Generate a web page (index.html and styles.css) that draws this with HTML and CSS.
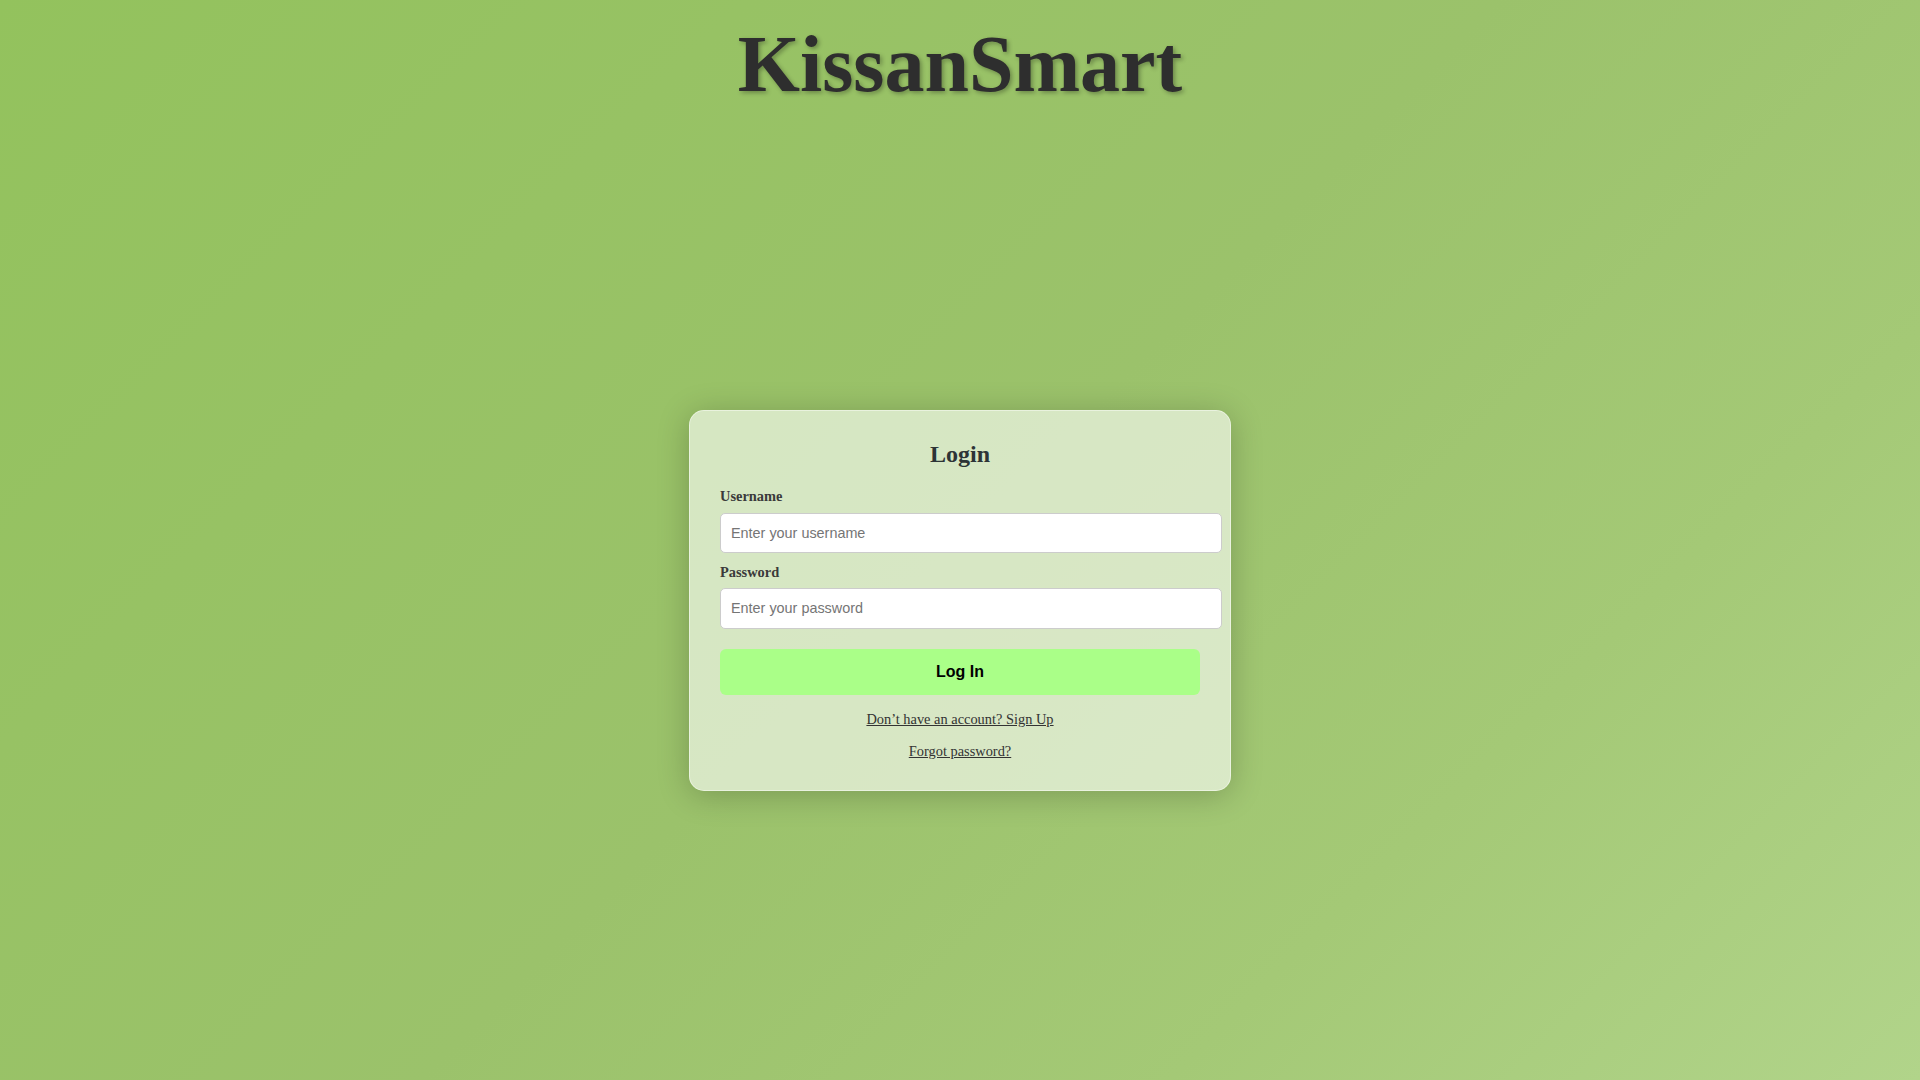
FILE: index.html
```html
<!DOCTYPE html>
<html lang="en">
<head>
<meta charset="utf-8">
<title>KissanSmart - Login</title>
<link rel="stylesheet" href="styles.css">
</head>
<body>
<header class="site-header">
  <h1 class="brand">KissanSmart</h1>
</header>
<main class="page-main">
  <div class="login-card">
    <h2 class="login-title">Login</h2>
    <form class="login-form" onsubmit="return false;">
      <label class="field-label" for="username">Username</label>
      <input class="field-input" id="username" type="text" placeholder="Enter your username">
      <label class="field-label" for="password">Password</label>
      <input class="field-input" id="password" type="password" placeholder="Enter your password">
      <button class="login-button" type="submit">Log In</button>
    </form>
    <div class="link-row"><a class="card-link" href="#">Don’t have an account? Sign Up</a></div>
    <div class="link-row"><a class="card-link" href="#">Forgot password?</a></div>
  </div>
</main>
</body>
</html>
```
FILE: styles.css
```css
html, body {
  margin: 0;
  padding: 0;
  height: 100%;
}
body {
  font-family: "Liberation Serif", "Times New Roman", serif;
  background: linear-gradient(135deg, #93c25d 0%, #9bc26b 50%, #a4c976 75%, #b1d48a 100%);
  display: flex;
  flex-direction: column;
  min-height: 100vh;
  color: #333;
}
.site-header {
  padding-top: 19px;
  height: 102px;
  text-align: center;
}
.brand {
  margin: 0;
  font-size: 80px;
  font-weight: bold;
  color: #2e2e2e;
  text-shadow: 2px 2px 4px rgba(0, 0, 0, 0.3);
  line-height: normal;
}
.page-main {
  flex: 1;
  display: flex;
  align-items: center;
  justify-content: center;
}
.login-card {
  width: 480px;
  padding: 30px;
  border: 1px solid rgba(255, 255, 255, 0.45);
  border-radius: 15px;
  background: rgba(255, 255, 255, 0.6);
  box-shadow: 0 4px 32px rgba(0, 0, 0, 0.22);
}
.login-title {
  margin: 0 0 19.9px;
  font-size: 24px;
  text-align: center;
  color: #2d3436;
}
.login-form {
  display: flex;
  flex-direction: column;
  align-items: flex-start;
}
.field-label {
  display: block;
  font-size: 14.4px;
  font-weight: bold;
  color: #3a3a3a;
  margin-bottom: 7.5px;
}
.field-input {
  box-sizing: content-box;
  width: 100%;
  height: 18.6px;
  padding: 10px;
  margin: 0 0 10.3px;
  border: 1px solid #cccccc;
  border-radius: 5px;
  background: #ffffff;
  font-family: "Liberation Sans", Arial, sans-serif;
  font-size: 14.4px;
  color: #333;
  outline: none;
}
.field-input::placeholder {
  color: #757575;
}
.login-button {
  width: 480px;
  height: 46px;
  margin-top: 10.4px;
  border: none;
  border-radius: 6px;
  background: #aaff88;
  color: #000;
  font-family: "Liberation Sans", Arial, sans-serif;
  font-size: 16px;
  font-weight: bold;
  cursor: pointer;
}
.link-row {
  margin-top: 15.2px;
  text-align: center;
  font-size: 14.4px;
  line-height: normal;
}
.card-link {
  color: #333;
  text-decoration: underline;
}
```
